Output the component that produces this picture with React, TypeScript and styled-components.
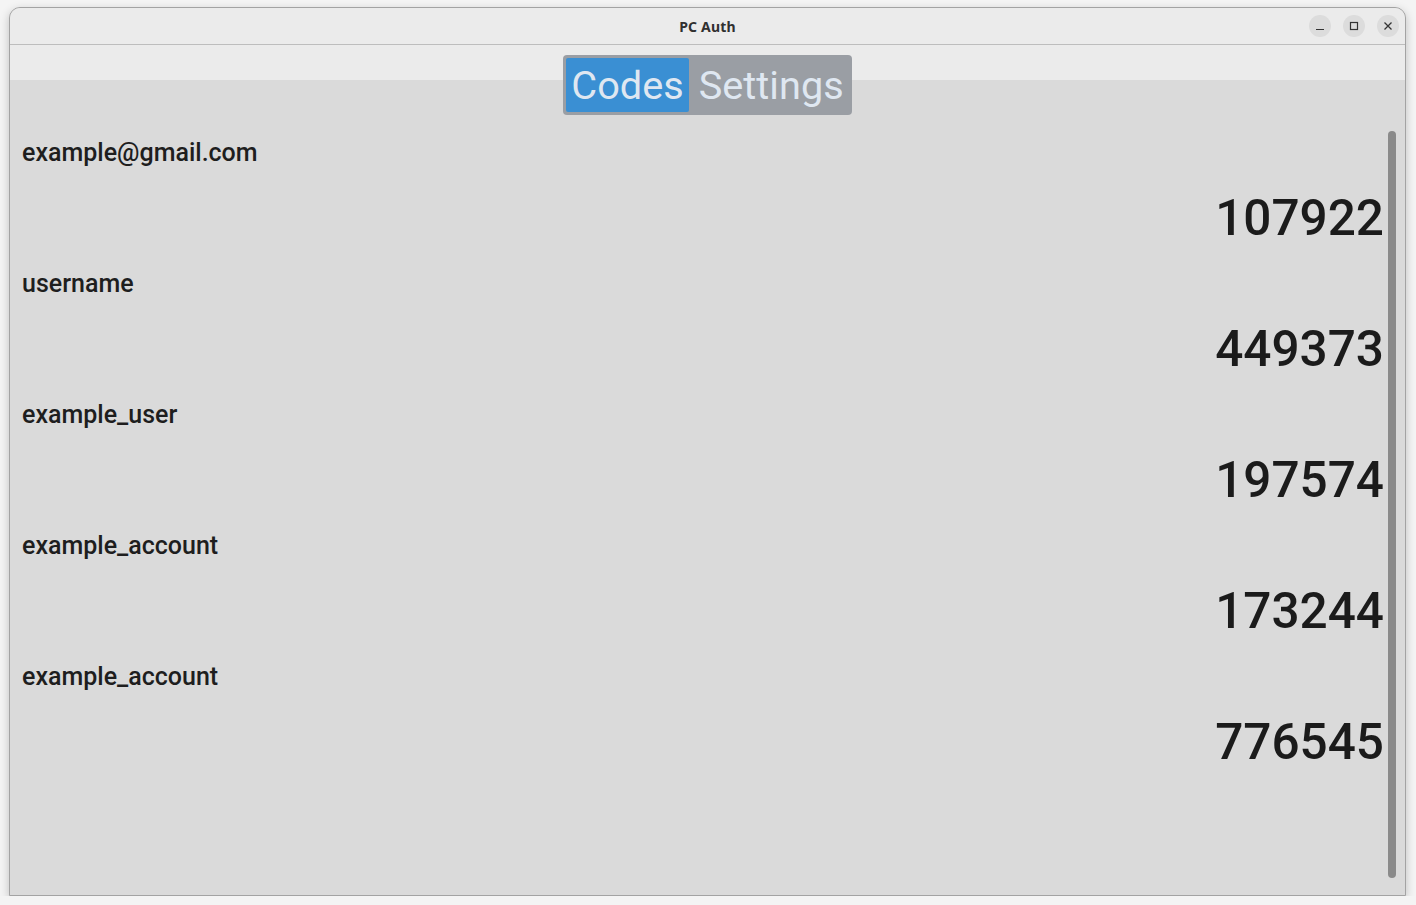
import React from "react";
import styled, { createGlobalStyle } from "styled-components";

const Global = createGlobalStyle`
  html, body { margin: 0; padding: 0; }
  body {
    background: #f4f4f4;
    font-family: Roboto, "Noto Sans", sans-serif;
    overflow: hidden;
  }
  #root { padding: 7px 10px 0 9px; }
`;

const Window = styled.div`
  width: 1397px;
  height: 889px;
  box-sizing: border-box;
  border: 1px solid #a3a3a3;
  border-radius: 11px 11px 0 0;
  box-shadow: 0 3px 10px rgba(0, 0, 0, 0.22);
  overflow: hidden;
  display: flex;
  flex-direction: column;
  background: #dadada;
`;

const TitleBar = styled.div`
  height: 36px;
  flex: none;
  background: #ebebeb;
  border-bottom: 1px solid #bdbdbd;
  display: grid;
  grid-template-columns: 1fr auto 1fr;
  align-items: center;
`;

const Title = styled.div`
  grid-column: 2;
  font-family: "Noto Sans", sans-serif;
  font-weight: 700;
  font-size: 14px;
  color: #303030;
  letter-spacing: 0.2px;
`;

const Controls = styled.div`
  grid-column: 3;
  justify-self: end;
  display: flex;
  gap: 12px;
  padding-right: 6px;
`;

const CtrlButton = styled.div`
  width: 22px;
  height: 22px;
  border-radius: 50%;
  background: #dcdcdc;
  display: flex;
  align-items: center;
  justify-content: center;
`;

const Main = styled.div`
  flex: 1;
  position: relative;
  display: flex;
  flex-direction: column;
  background: linear-gradient(#ebebeb 0, #ebebeb 35px, #dadada 35px);
`;

const TabBar = styled.div`
  align-self: center;
  margin-top: 10px;
  display: flex;
  padding: 3px;
  background: #9a9ea4;
  border-radius: 4px;
`;

const Tab = styled.div<{ $active?: boolean }>`
  height: 54px;
  box-sizing: border-box;
  display: flex;
  align-items: center;
  padding: 0 5px 0 ${(p) => (p.$active ? "5px" : "10px")};
  font-family: Roboto, sans-serif;
  font-size: 39.7px;
  color: #dfe7f1;
  background: ${(p) => (p.$active ? "#3a8fd3" : "transparent")};
  border-radius: 2px;
`;

const List = styled.div`
  display: flex;
  flex-direction: column;
  padding: 23px 21px 0 12px;
`;

const Entry = styled.div`
  display: flex;
  flex-direction: column;
  padding-bottom: 21px;
`;

const Label = styled.div`
  font-family: Roboto, sans-serif;
  font-weight: 500;
  font-size: 25px;
  line-height: 30px;
  color: #1e1e1e;
`;

const Code = styled.div`
  margin-top: 20px;
  text-align: right;
  font-family: Roboto, sans-serif;
  font-weight: 500;
  font-size: 49.5px;
  line-height: 60px;
  color: #1b1b1b;
`;

const ScrollThumb = styled.div`
  position: absolute;
  right: 9px;
  top: 86px;
  width: 8px;
  height: 747px;
  border-radius: 4px;
  background: #8a8a8a;
`;

const entries = [
  { name: "example@gmail.com", code: "107922" },
  { name: "username", code: "449373" },
  { name: "example_user", code: "197574" },
  { name: "example_account", code: "173244" },
  { name: "example_account", code: "776545" },
];

export default function App() {
  return (
    <>
      <Global />
      <Window>
        <TitleBar>
          <Title>PC Auth</Title>
          <Controls>
            <CtrlButton>
              <svg width="10" height="10" viewBox="0 0 10 10">
                <path d="M1 8.5h8" stroke="#333" strokeWidth="1.2" />
              </svg>
            </CtrlButton>
            <CtrlButton>
              <svg width="10" height="10" viewBox="0 0 10 10">
                <rect x="1.5" y="1.5" width="7" height="7" fill="none" stroke="#333" strokeWidth="1.2" />
              </svg>
            </CtrlButton>
            <CtrlButton>
              <svg width="10" height="10" viewBox="0 0 10 10">
                <path d="M1.5 1.5l7 7M8.5 1.5l-7 7" stroke="#333" strokeWidth="1.3" />
              </svg>
            </CtrlButton>
          </Controls>
        </TitleBar>
        <Main>
          <TabBar>
            <Tab $active>Codes</Tab>
            <Tab>Settings</Tab>
          </TabBar>
          <List>
            {entries.map((e, i) => (
              <Entry key={i}>
                <Label>{e.name}</Label>
                <Code>{e.code}</Code>
              </Entry>
            ))}
          </List>
          <ScrollThumb />
        </Main>
      </Window>
    </>
  );
}
